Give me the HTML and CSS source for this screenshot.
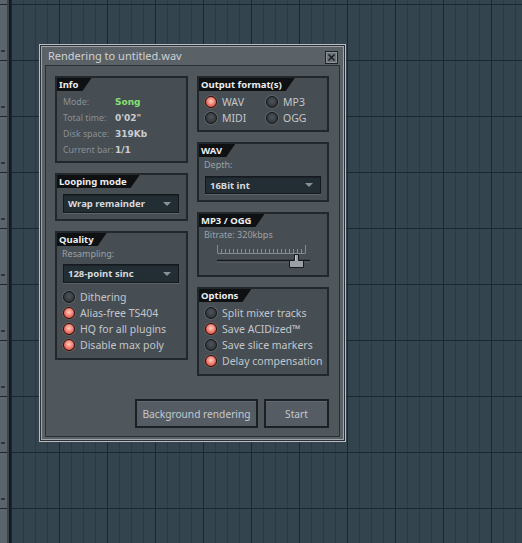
FILE: index.html
```html
<!DOCTYPE html>
<html>
<head>
<meta charset="utf-8">
<title>Rendering</title>
<link rel="stylesheet" href="styles.css">
</head>
<body>
<div class="screen">
  <div class="strip"></div>
  <div class="canvas">
    <div class="dialog">
      <div class="titlebar">
        <span class="title">Rendering to untitled.wav</span>
        <svg class="close" width="13" height="13" viewBox="0 0 13 13">
          <rect x="0.5" y="0.5" width="12" height="12" fill="#6b7278" stroke="#1e2226"/>
          <rect x="1.5" y="1.5" width="10" height="10" fill="none" stroke="#8a9096" stroke-width="1"/>
          <path d="M3.5 3.5 L9.5 9.5 M9.5 3.5 L3.5 9.5" stroke="#15181b" stroke-width="1.4"/>
        </svg>
      </div>
      <div class="content">
        <div class="columns">
          <div class="col">
            <section class="panel p-info">
              <div class="tab">Info</div>
              <div class="info">
                <span class="lbl">Mode:</span><span class="val green">Song</span>
                <span class="lbl">Total time:</span><span class="val">0'02"</span>
                <span class="lbl">Disk space:</span><span class="val">319Kb</span>
                <span class="lbl">Current bar:</span><span class="val">1/1</span>
              </div>
            </section>
            <section class="panel p-loop">
              <div class="tab">Looping mode</div>
              <div class="dropdown dd-loop"><span>Wrap remainder</span><i class="arrow"></i></div>
            </section>
            <section class="panel p-quality">
              <div class="tab">Quality</div>
              <div class="small">Resampling:</div>
              <div class="dropdown dd-quality"><span>128-point sinc</span><i class="arrow"></i></div>
              <div class="options opt-quality">
                <div class="opt"><i class="radio"></i>Dithering</div>
                <div class="opt"><i class="radio on"></i>Alias-free TS404</div>
                <div class="opt"><i class="radio on"></i>HQ for all plugins</div>
                <div class="opt"><i class="radio on"></i>Disable max poly</div>
              </div>
            </section>
          </div>
          <div class="col">
            <section class="panel p-output">
              <div class="tab">Output format(s)</div>
              <div class="formats">
                <div class="opt"><i class="radio on"></i>WAV</div>
                <div class="opt"><i class="radio"></i>MP3</div>
                <div class="opt"><i class="radio"></i>MIDI</div>
                <div class="opt"><i class="radio"></i>OGG</div>
              </div>
            </section>
            <section class="panel p-wav">
              <div class="tab">WAV</div>
              <div class="small">Depth:</div>
              <div class="dropdown dd-wav"><span>16Bit int</span><i class="arrow"></i></div>
            </section>
            <section class="panel p-mp3">
              <div class="tab">MP3 / OGG</div>
              <div class="small">Bitrate: 320kbps</div>
              <svg class="slider" width="104" height="26" viewBox="0 0 104 26">
                <g stroke="#858b90" stroke-width="1">
                  <path d="M5.5 2 V10 M9.5 6 V10 M13.5 6 V10 M17.5 6 V10 M21.5 6 V10 M25.5 6 V10 M29.5 6 V10 M33.5 6 V10 M37.5 6 V10 M41.5 6 V10 M45.5 6 V10 M49.5 6 V10 M53.5 6 V10 M57.5 6 V10 M61.5 6 V10 M65.5 6 V10 M69.5 6 V10 M73.5 6 V10 M77.5 6 V10 M81.5 6 V10 M85.5 6 V10 M89.5 6 V10 M93.5 2 V10 M5.5 10.5 H93.5"/>
                </g>
                <path d="M5 17.5 H98" stroke="#15191c" stroke-width="1.6"/>
                <path d="M5 19 H98" stroke="#646b71" stroke-width="0.8"/>
                <path d="M77.5 24.5 V17.5 H82.5 V11.5 H86.5 V17.5 H91.5 V24.5 Z" fill="#9aa0a5" stroke="#16191c" stroke-width="1"/>
                <path d="M83.5 12.5 V17.5" stroke="#c4c9cd" stroke-width="1"/>
              </svg>
            </section>
            <section class="panel p-options">
              <div class="tab">Options</div>
              <div class="options opt-right">
                <div class="opt"><i class="radio"></i>Split mixer tracks</div>
                <div class="opt"><i class="radio on"></i>Save ACIDized™</div>
                <div class="opt"><i class="radio"></i>Save slice markers</div>
                <div class="opt"><i class="radio on"></i>Delay compensation</div>
              </div>
            </section>
          </div>
        </div>
        <div class="buttons">
          <button class="btn btn-bg">Background rendering</button>
          <button class="btn btn-start">Start</button>
        </div>
      </div>
    </div>
  </div>
</div>
</body>
</html>
```

FILE: styles.css
```css
html, body {
  margin: 0;
  padding: 0;
  width: 522px;
  height: 543px;
  overflow: hidden;
  background: #34444f;
}

.screen {
  display: flex;
  width: 522px;
  height: 543px;
}

.strip {
  width: 7px;
  flex: none;
  background-color: #59646b;
  border-right: 2px solid #3b454c;
  background-image:
    linear-gradient(to bottom, #1e272d 1px, transparent 1px),
    linear-gradient(to bottom, #2c353b 2px, transparent 2px);
  background-size: 100% 56px, 4px 56px;
  background-position: 0 4px, 1px 50px;
  background-repeat: repeat-y;
}

.canvas {
  flex: 1;
  border-left: 2px solid #141b20;
  padding: 44px 0 0 28px;
  background-color: #34444f;
  background-image:
    linear-gradient(to bottom, #1b2831 1px, transparent 1px),
    linear-gradient(to right, #1b2831 1px, transparent 1px),
    linear-gradient(to right, #2a3944 1px, transparent 1px);
  background-size: 100% 56px, 48px 100%, 12px 100%;
  background-position: 0 4px, 0 0, 0 0;
}

.dialog {
  box-sizing: border-box;
  width: 307px;
  height: 398px;
  border: 1px solid #b9bdc1;
  background: #5a6167;
  box-shadow: inset 0 0 0 1px #2a3035, inset 0 0 0 2px #a0a5aa;
  padding: 2px;
  display: flex;
  flex-direction: column;
}

.titlebar {
  height: 18px;
  display: flex;
  align-items: center;
  justify-content: space-between;
  padding: 0 5px 0 6px;
  flex: none;
}

.title {
  font-family: "Noto Sans", sans-serif;
  font-size: 11px;
  color: #cdd1d4;
  line-height: 18px;
}

.close {
  display: block;
  margin-top: 2px;
}

.content {
  flex: 1;
  margin: 0 3px 2px;
  border: 1px solid #2a2f34;
  background: #4f565c;
  padding: 10px 10px 0 9px;
  display: flex;
  flex-direction: column;
}

.columns {
  display: grid;
  grid-template-columns: 133px 132px;
  column-gap: 9px;
  align-items: start;
}

.col {
  display: flex;
  flex-direction: column;
  gap: 10px;
}

.panel {
  box-sizing: border-box;
  border: 2px solid #22272b;
  background: #464d53;
  display: flex;
  flex-direction: column;
}

.p-info { height: 87px; }
.p-loop { height: 48px; }
.p-quality { height: 129px; }
.p-output { height: 56px; }
.p-wav { height: 60px; }
.p-mp3 { height: 65px; }
.p-options { height: 89px; }

.tab {
  align-self: flex-start;
  height: 13px;
  line-height: 13px;
  padding: 0 13px 0 2px;
  background: #0e1012;
  color: #eceef0;
  font-family: "Noto Sans", sans-serif;
  font-weight: bold;
  font-size: 9.5px;
  clip-path: polygon(0 0, 100% 0, calc(100% - 9px) 100%, 0 100%);
}

.info {
  display: grid;
  grid-template-columns: 52px auto;
  grid-auto-rows: 16px;
  align-items: center;
  padding: 3px 0 0 6px;
}

.lbl {
  font-family: "Noto Sans", sans-serif;
  font-size: 8.8px;
  color: #8a9095;
}

.val {
  font-family: "DejaVu Sans", sans-serif;
  font-weight: bold;
  font-size: 9px;
  color: #c9cdd0;
}

.val.green { color: #86e070; }

.small {
  font-family: "Noto Sans", sans-serif;
  font-size: 9px;
  line-height: 12px;
  color: #9ba1a6;
  margin: 2px 0 0 5px;
}

.dropdown {
  box-sizing: border-box;
  width: 116px;
  border: 1px solid #14191d;
  background: #232d34;
  box-shadow: inset 0 1px 0 #1a2228, 0 1px 0 #5d646a;
  display: flex;
  align-items: center;
  justify-content: space-between;
  padding: 0 7px 0 4px;
  font-family: "Noto Sans", sans-serif;
  font-weight: bold;
  font-size: 9.5px;
  color: #d6d9dc;
}

.dd-loop { height: 19px; margin: 6px 0 0 6px; }
.dd-quality { height: 19px; margin: 4px 0 0 6px; }
.dd-wav { height: 18px; margin: 5px 0 0 6px; }

.arrow {
  width: 0;
  height: 0;
  border-left: 4px solid transparent;
  border-right: 4px solid transparent;
  border-top: 4px solid #8a9095;
}

.options {
  display: flex;
  flex-direction: column;
}

.opt-quality { margin: 6px 0 0 6px; }
.opt-right { margin: 3px 0 0 6px; }

.formats {
  display: grid;
  grid-template-columns: 61px auto;
  margin: 3px 0 0 6px;
}

.opt {
  display: flex;
  align-items: center;
  height: 16px;
  font-family: "Noto Sans", sans-serif;
  font-size: 10.5px;
  color: #c3c7cb;
  white-space: nowrap;
}

.radio {
  box-sizing: border-box;
  width: 12px;
  height: 12px;
  border-radius: 50%;
  margin-right: 5px;
  flex: none;
  border: 1px solid #15181b;
  background: radial-gradient(circle at 50% 40%, #4f555a 0%, #363b40 60%, #2a2e32 100%);
  box-shadow: 0 0 0 1px #5c6369;
}

.radio.on {
  border-color: #2a1412;
  background: radial-gradient(circle at 50% 42%, #ffd0c4 0%, #f39586 35%, #d9493d 80%, #a8322a 100%);
  box-shadow: 0 0 0 1px #6a5a58;
}

.slider {
  display: block;
  margin: 2px 0 0 13px;
}

.buttons {
  display: flex;
  justify-content: flex-end;
  gap: 6px;
  margin-top: 23px;
}

.btn {
  box-sizing: border-box;
  height: 29px;
  border: 2px solid #1c2024;
  background: #555c63;
  box-shadow: inset 0 1px 0 #646b72;
  color: #c4c9ce;
  font-family: "Noto Sans", sans-serif;
  font-size: 10.2px;
  padding: 0;
}

.btn-bg { width: 123px; }
.btn-start { width: 65px; }
```
